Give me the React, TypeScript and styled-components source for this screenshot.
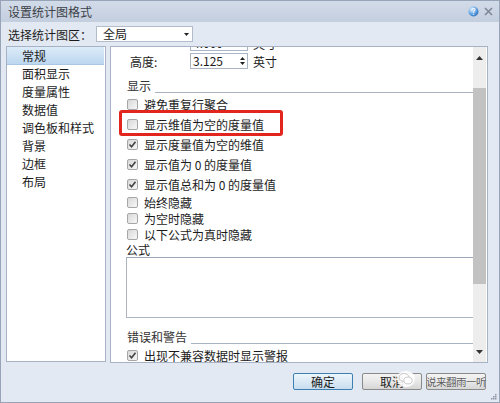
import React from "react";
import styled, { createGlobalStyle } from "styled-components";

const GlobalStyle = createGlobalStyle`
  html, body {
    margin: 0;
    padding: 0;
    background: #e3e9f2;
  }
  body {
    font-family: "Noto Sans CJK SC", "Noto Sans", sans-serif;
    font-size: 12px;
    color: #1c1c1c;
  }
`;

const Dialog = styled.div`
  position: relative;
  width: 500px;
  height: 403px;
  box-sizing: border-box;
  border: 1px solid #97a3b6;
  background: #e3e9f2;
  display: flex;
  flex-direction: column;
  overflow: hidden;
`;

const TitleBar = styled.div`
  height: 21px;
  flex: none;
  display: flex;
  align-items: center;
  justify-content: space-between;
  padding: 0 6px 0 7px;
  background: linear-gradient(#d2dbe8, #c3cedf);
  color: #3b3f46;
  line-height: 21px;
`;

const TitleIcons = styled.div`
  display: flex;
  align-items: center;
  gap: 5px;
`;

const Toolbar = styled.div`
  height: 24px;
  flex: none;
  display: flex;
  align-items: center;
  padding-left: 7px;
  gap: 4px;
`;

const Select = styled.div`
  width: 97px;
  height: 16px;
  box-sizing: border-box;
  border: 1px solid #b2bccb;
  background: #fff;
  display: flex;
  align-items: center;
  justify-content: space-between;
  padding: 0 3px 0 6px;
  line-height: 14px;
`;

const Main = styled.div`
  height: 317px;
  flex: none;
  display: flex;
  gap: 4px;
  padding: 0 11px 0 5px;
`;

const NavList = styled.ul`
  width: 100px;
  box-sizing: border-box;
  margin: 0 0 1px 0;
  padding: 0;
  list-style: none;
  background: #fff;
  border: 1px solid #a7b3c4;
`;

const NavItem = styled.li<{ $active?: boolean }>`
  height: 18px;
  line-height: 18px;
  padding-left: 15px;
  margin-right: 1px;
  box-sizing: border-box;
  background: ${({ $active }) =>
    $active ? "linear-gradient(#dcebf8, #bcd7ef)" : "transparent"};
  border-bottom: ${({ $active }) => ($active ? "1px solid #a9c7e3" : "none")};
`;

const Panel = styled.div`
  flex: 1;
  display: flex;
  background: #fff;
  border: 1px solid #a7b3c4;
  overflow: hidden;
`;

const PanelBody = styled.div`
  flex: 1;
  overflow: hidden;
  display: flex;
  flex-direction: column;
`;

const FieldRow = styled.div<{ $mt: number }>`
  display: flex;
  align-items: center;
  height: 16px;
  flex: none;
  margin-top: ${({ $mt }) => $mt}px;
  padding-left: 19px;
`;

const FieldLabel = styled.span`
  width: 60px;
`;

const Spinner = styled.div`
  width: 58px;
  height: 16px;
  box-sizing: border-box;
  border: 1px solid #a9b4c4;
  display: flex;
  align-items: center;
  justify-content: space-between;
  padding: 0 2px 0 2px;
  font-size: 12px;
  line-height: 14px;
`;

const Unit = styled.span`
  margin-left: 5px;
`;

const SectionHeader = styled.div<{ $mt: number }>`
  display: flex;
  height: 16px;
  line-height: 15px;
  flex: none;
  margin-top: ${({ $mt }) => $mt}px;
  padding-left: 16px;
  color: #333;
`;

const SectionLine = styled.span`
  flex: 1;
  align-self: flex-end;
  height: 1px;
  margin: 0 0 1px 4px;
  background: #a7b3c3;
`;

const CheckRow = styled.div<{ $h: number }>`
  position: relative;
  display: flex;
  align-items: center;
  height: ${({ $h }) => $h}px;
  flex: none;
  padding-left: 16px;
  gap: 6px;
`;

const Box = styled.span`
  width: 11px;
  height: 11px;
  box-sizing: border-box;
  border: 1px solid #a6a6a6;
  border-radius: 2px;
  background: linear-gradient(135deg, #d8d8d8, #f7f7f7);
  display: flex;
  align-items: center;
  justify-content: center;
`;

const Highlight = styled.span`
  position: absolute;
  left: 8px;
  top: -4px;
  width: 164px;
  height: 26px;
  box-sizing: border-box;
  border: 3px solid #e2261d;
  border-radius: 3px;
  pointer-events: none;
`;

const FormulaLabel = styled.div`
  height: 15px;
  line-height: 15px;
  flex: none;
  padding-left: 15px;
`;

const FormulaBox = styled.div`
  height: 61px;
  flex: none;
  margin-left: 15px;
  box-sizing: border-box;
  border: 1px solid #aab4c3;
  border-right: none;
  border-top-color: #9aa6b7;
`;

const ScrollBar = styled.div`
  width: 13px;
  flex: none;
  margin-right: 1px;
  background: #ededed;
  display: flex;
  flex-direction: column;
  align-items: center;
`;

const ScrollArrow = styled.div<{ $h: number }>`
  height: ${({ $h }) => $h}px;
  flex: none;
  display: flex;
  align-items: center;
  justify-content: center;
`;

const Thumb = styled.div`
  width: 13px;
  height: 196px;
  flex: none;
  background: #c2c2c2;
  margin-top: 20px;
`;

const Footer = styled.div`
  position: relative;
  flex: 1;
  display: flex;
  justify-content: flex-end;
  align-items: flex-start;
  padding: 10px 13px 0 0;
`;

const Button = styled.div<{ $primary?: boolean; $ml: number }>`
  width: 60px;
  height: 17px;
  box-sizing: border-box;
  margin-left: ${({ $ml }) => $ml}px;
  border: 1px solid ${({ $primary }) => ($primary ? "#3c7fb1" : "#8a8a8a")};
  border-radius: 2px;
  background: ${({ $primary }) =>
    $primary
      ? "linear-gradient(#eef6fc, #dbe9f5 50%, #c9def0)"
      : "linear-gradient(#f3f3f3, #e8e8e8 50%, #d6d6d6)"};
  display: flex;
  align-items: center;
  justify-content: center;
  line-height: 15px;
`;

const Watermark = styled.span`
  font-size: 10.5px;
  color: #5c5c5c;
  letter-spacing: -0.5px;
  white-space: nowrap;
  text-shadow: 0 0 1px #fff;
`;

const WeChatMark = styled.svg`
  position: absolute;
  left: 396px;
  top: 8px;
`;

const Grip = styled.svg`
  position: absolute;
  right: 2px;
  bottom: 2px;
`;

const Check = ({ checked }: { checked?: boolean }) => (
  <Box>
    {checked && (
      <svg width="9" height="9" viewBox="0 0 9 9">
        <path d="M1.5 4.5 L3.6 6.8 L7.5 1.8" fill="none" stroke="#444" strokeWidth="1.6" />
      </svg>
    )}
  </Box>
);

const CheckItem = ({
  label,
  checked,
  h = 20,
  marked,
}: {
  label: string;
  checked?: boolean;
  h?: number;
  marked?: boolean;
}) => (
  <CheckRow $h={h}>
    <Check checked={checked} />
    <span>{label}</span>
    {marked && <Highlight />}
  </CheckRow>
);

const Triangle = ({ up }: { up?: boolean }) => (
  <svg width="7" height="4" viewBox="0 0 7 4">
    <path d={up ? "M0 4 L3.5 0 L7 4 Z" : "M0 0 L3.5 4 L7 0 Z"} fill="#333" />
  </svg>
);

const SpinArrows = () => (
  <svg width="5" height="10" viewBox="0 0 5 10">
    <path d="M0 4 L2.5 1 L5 4 Z M0 6 L2.5 9 L5 6 Z" fill="#222" />
  </svg>
);

const navItems = ["常规", "面积显示", "度量属性", "数据值", "调色板和样式", "背景", "边框", "布局"];

export default function App() {
  return (
    <>
      <GlobalStyle />
      <Dialog>
        <TitleBar>
          <span>设置统计图格式</span>
          <TitleIcons>
            <svg width="11" height="11" viewBox="0 0 11 11">
              <defs>
                <radialGradient id="hb" cx="0.35" cy="0.3" r="0.8">
                  <stop offset="0" stopColor="#e4f2ff" />
                  <stop offset="0.6" stopColor="#5a9ee0" />
                  <stop offset="1" stopColor="#2a6bb5" />
                </radialGradient>
              </defs>
              <circle cx="5.5" cy="5.5" r="5" fill="url(#hb)" />
              <text x="5.5" y="8.5" fontSize="8" textAnchor="middle" fill="#fff" fontFamily="DejaVu Sans, sans-serif">?</text>
            </svg>
            <svg width="9" height="9" viewBox="0 0 9 9">
              <path d="M1 1 L8 8 M8 1 L1 8" stroke="#7d8899" strokeWidth="1.6" />
            </svg>
          </TitleIcons>
        </TitleBar>

        <Toolbar>
          <span>选择统计图区：</span>
          <Select>
            <span>全局</span>
            <svg width="5" height="3" viewBox="0 0 5 3">
              <path d="M0 0 L5 0 L2.5 3 Z" fill="#222" />
            </svg>
          </Select>
        </Toolbar>

        <Main>
          <NavList>
            {navItems.map((item, i) => (
              <NavItem key={item} $active={i === 0}>
                {item}
              </NavItem>
            ))}
          </NavList>

          <Panel>
            <PanelBody>
              {/* row scrolled almost out of view */}
              <FieldRow $mt={-12}>
                <FieldLabel />
                <Spinner>
                  <span>4.000</span>
                  <SpinArrows />
                </Spinner>
                <Unit>英寸</Unit>
              </FieldRow>
              <FieldRow $mt={2}>
                <FieldLabel>高度:</FieldLabel>
                <Spinner>
                  <span>3.125</span>
                  <SpinArrows />
                </Spinner>
                <Unit>英寸</Unit>
              </FieldRow>

              <SectionHeader $mt={9}>
                <span>显示</span>
                <SectionLine />
              </SectionHeader>
              <CheckItem label="避免重复行聚合" />
              <CheckItem label="显示维值为空的度量值" marked />
              <CheckItem label="显示度量值为空的维值" checked />
              <CheckItem label="显示值为 0 的度量值" checked />
              <CheckItem label="显示值总和为 0 的度量值" checked />
              <CheckItem label="始终隐藏" h={17} />
              <CheckItem label="为空时隐藏" h={15} />
              <CheckItem label="以下公式为真时隐藏" h={16} />
              <FormulaLabel>公式</FormulaLabel>
              <FormulaBox />

              <SectionHeader $mt={11}>
                <span>错误和警告</span>
                <SectionLine />
              </SectionHeader>
              <CheckItem label="出现不兼容数据时显示警报" checked />
            </PanelBody>

            <ScrollBar>
              <ScrollArrow $h={21}>
                <Triangle up />
              </ScrollArrow>
              <Thumb />
              <div style={{ flex: 1 }} />
              <ScrollArrow $h={20}>
                <Triangle />
              </ScrollArrow>
            </ScrollBar>
          </Panel>
        </Main>

        <Footer>
          <Button $primary $ml={0}>确定</Button>
          <Button $ml={9}>取消</Button>
          <Button $ml={4}>
            <Watermark>说来翻雨一听</Watermark>
          </Button>
          <WeChatMark width="18" height="16" viewBox="0 0 18 16">
            <ellipse cx="9" cy="8" rx="9" ry="8" fill="#fff" opacity="0.9" />
            <ellipse cx="7" cy="6.5" rx="5" ry="4" fill="none" stroke="#c9c9c9" strokeWidth="1" />
            <ellipse cx="11" cy="9.5" rx="4.2" ry="3.4" fill="#fff" stroke="#c9c9c9" strokeWidth="1" />
          </WeChatMark>
          <Grip width="7" height="7" viewBox="0 0 7 7">
            <rect x="5" y="1" width="1.5" height="1.5" fill="#8c96a6" />
            <rect x="3" y="3" width="1.5" height="1.5" fill="#8c96a6" />
            <rect x="5" y="3" width="1.5" height="1.5" fill="#8c96a6" />
            <rect x="1" y="5" width="1.5" height="1.5" fill="#8c96a6" />
            <rect x="3" y="5" width="1.5" height="1.5" fill="#8c96a6" />
            <rect x="5" y="5" width="1.5" height="1.5" fill="#8c96a6" />
          </Grip>
        </Footer>
      </Dialog>
    </>
  );
}
